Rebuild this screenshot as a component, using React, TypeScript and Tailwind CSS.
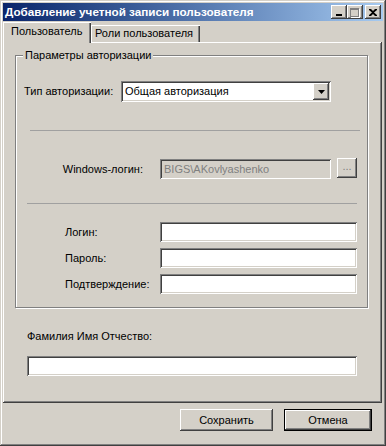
const raised =
  'shadow-[inset_-1px_-1px_#404040,inset_1px_1px_#ffffff,inset_-2px_-2px_#808080,inset_2px_2px_#d4d0c8]';
const sunken =
  'shadow-[inset_1px_1px_#808080,inset_-1px_-1px_#ffffff,inset_2px_2px_#404040,inset_-2px_-2px_#d4d0c8]';

function Field({ className = '', children }: { className?: string; children?: React.ReactNode }) {
  return (
    <div className={`h-[20px] bg-white ${sunken} flex items-center px-[4px] ${className}`}>{children}</div>
  );
}

function CaptionButton({ children }: { children: React.ReactNode }) {
  return (
    <div className={`w-[16px] h-[14px] bg-[#d4d0c8] ${raised} flex items-center justify-center`}>{children}</div>
  );
}

export default function App() {
  return (
    <div
      className="w-[386px] h-[446px] bg-[#d4d0c8] p-[3px] flex flex-col text-[11px] text-black shadow-[inset_-1px_-1px_#404040,inset_1px_1px_#d4d0c8,inset_-2px_-2px_#808080,inset_2px_2px_#ffffff]"
      style={{ fontFamily: '"Liberation Sans", Arial, sans-serif' }}
    >
      {/* Title bar */}
      <div className="h-[18px] shrink-0 flex items-center justify-between pl-[2px] pr-[2px] bg-linear-to-r from-[#0a246a] to-[#a6caf0]">
        <span className="text-white font-bold text-[11.7px] leading-none">
          Добавление учетной записи пользователя
        </span>
        <div className="flex items-center">
          <CaptionButton>
            <div className="w-[6px] h-[2px] bg-black mt-[6px] -ml-[1px]" />
          </CaptionButton>
          <CaptionButton>
            <div className="w-[9px] h-[9px] border border-[#808080] border-t-2 shadow-[1px_1px_#ffffff] -ml-[1px]" />
          </CaptionButton>
          <div className="w-[2px]" />
          <CaptionButton>
            <svg width="8" height="7" viewBox="0 0 8 7" className="-ml-[1px]">
              <path d="M0 0h2l2 2 2-2h2v1L5 3.5 8 6v1H6L4 5 2 7H0V6l3-2.5L0 1z" fill="#000" />
            </svg>
          </CaptionButton>
        </div>
      </div>

      {/* Tabs */}
      <div className="h-[21px] shrink-0 flex items-end">
        <div className="relative z-10 -mb-[1px] w-[88px] h-[21px] bg-[#d4d0c8] shadow-[inset_1px_1px_#ffffff,inset_-1px_0_#404040,inset_-2px_0_#808080] flex items-center pl-[8px] pb-[2px]">
          Пользователь
        </div>
        <div className="w-[109px] h-[17px] shadow-[inset_1px_1px_#ffffff,inset_-1px_0_#404040,inset_-2px_0_#808080] flex items-center pl-[4px]">
          Роли пользователя
        </div>
      </div>

      {/* Tab panel */}
      <div className={`flex-1 mr-[1px] pl-[12px] pt-[13px] ${raised}`}>
        <div className="relative w-[353px] h-[253px] border border-[#808080] shadow-[inset_1px_1px_#ffffff,1px_1px_#ffffff]">
          <span className="absolute left-[7px] -top-[7px] px-[2px] bg-[#d4d0c8] leading-[13px]">
            Параметры авторизации
          </span>

          <div className="flex items-center mt-[25px] pl-[8px]">
            <span className="w-[97px]">Тип авторизации:</span>
            <div className={`w-[210px] h-[21px] bg-white ${sunken} flex items-center justify-between pl-[4px] pr-[2px]`}>
              <span>Общая авторизация</span>
              <div className={`w-[16px] h-[17px] bg-[#d4d0c8] ${raised} flex items-center justify-center`}>
                <svg width="7" height="4" viewBox="0 0 7 4">
                  <path d="M0 0h7L3.5 4z" fill="#000" />
                </svg>
              </div>
            </div>
          </div>

          <div className="mt-[28px] ml-[14px] w-[330px] h-px bg-[#a0a0a0]" />

          <div className="flex items-start mt-[28px]">
            <span className="w-[144px] h-[20px] flex items-center justify-end pr-[17px]">Windows-логин:</span>
            <Field className="w-[171px] bg-[#d4d0c8]! text-[#808080]">BIGS\AKovlyashenko</Field>
            <div className={`ml-[6px] -mt-[1px] w-[20px] h-[20px] ${raised} flex items-end justify-center pb-[6px] text-[#808080] leading-none`}>
              ...
            </div>
          </div>

          <div className="mt-[24px] ml-[11px] w-[330px] h-px bg-[#a0a0a0]" />

          <div className="flex flex-col gap-[6px] mt-[18px] pl-[49px]">
            {['Логин:', 'Пароль:', 'Подтверждение:'].map((label) => (
              <div key={label} className="flex items-center">
                <span className="w-[95px]">{label}</span>
                <Field className="w-[197px]" />
              </div>
            ))}
          </div>
        </div>

        <div className="ml-[12px] mt-[22px] leading-[13px]">Фамилия Имя Отчество:</div>
        <Field className="ml-[12px] mt-[13px] w-[330px]" />
      </div>

      {/* Bottom buttons */}
      <div className="h-[40px] shrink-0 flex justify-end items-start gap-[11px] pt-[6px] pr-[11px]">
        <div className={`w-[93px] h-[22px] ${raised} flex items-center justify-center`}>Сохранить</div>
        <div className="w-[88px] h-[22px] shadow-[inset_0_0_0_1px_#000000,inset_-2px_-2px_#404040,inset_2px_2px_#ffffff,inset_-3px_-3px_#808080,inset_3px_3px_#d4d0c8] flex items-center justify-center">
          Отмена
        </div>
      </div>
    </div>
  );
}
